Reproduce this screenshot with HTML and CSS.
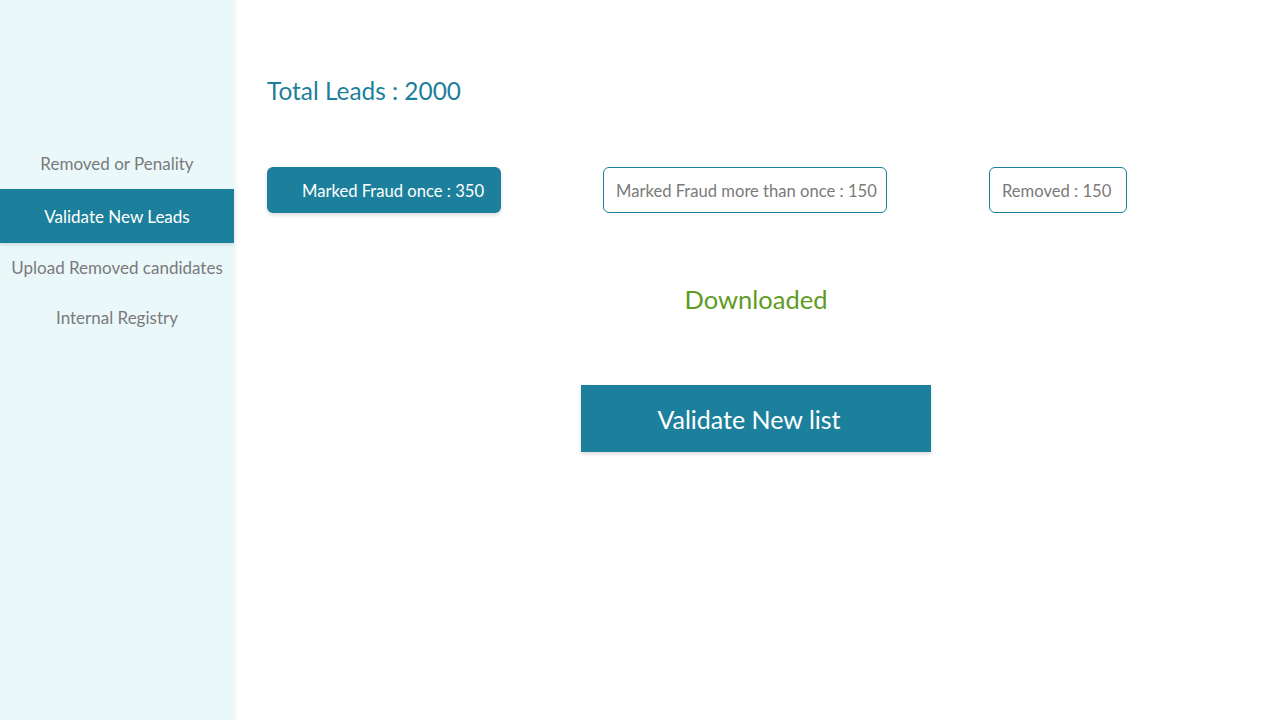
FILE: index.html
```html
<!DOCTYPE html>
<html>
<head>
<meta charset="utf-8">
<link rel="stylesheet" href="styles.css">
</head>
<body>
<div class="app">
  <aside class="sidebar">
    <nav class="nav">
      <div class="nav-item">Removed or Penality</div>
      <div class="nav-item active">Validate New Leads</div>
      <div class="nav-item">Upload Removed candidates</div>
      <div class="nav-item">Internal Registry</div>
    </nav>
  </aside>
  <main class="main">
    <h1 class="total">Total Leads : 2000</h1>
    <div class="cards">
      <div class="card filled">Marked Fraud once : 350</div>
      <div class="card outline">Marked Fraud more than once : 150</div>
      <div class="card outline">Removed : 150</div>
    </div>
    <div class="status">Downloaded</div>
    <div class="action">
      <button class="validate-btn">Validate New list</button>
    </div>
  </main>
</div>
</body>
</html>
```
FILE: styles.css
```css
html, body {
  margin: 0;
  padding: 0;
  background: #ffffff;
  font-family: Lato, "Open Sans", sans-serif;
}
.app {
  display: flex;
  width: 1280px;
  height: 720px;
}
.sidebar {
  width: 234px;
  flex: none;
  background: #eaf8fa;
  box-shadow: 2px 0 4px rgba(0,0,0,0.05);
  position: relative;
  z-index: 1;
}
.nav {
  display: flex;
  flex-direction: column;
  padding-top: 138px;
}
.nav-item {
  height: 48px;
  display: flex;
  align-items: center;
  justify-content: center;
  color: #7a7a7a;
  font-size: 17px;
  white-space: nowrap;
}
.nav-item:nth-child(1) { height: 51px; }
.nav-item.active {
  height: 54px;
  background: #1c809c;
  color: #ffffff;
  box-shadow: 0 2px 3px rgba(0,0,0,0.12);
}
.nav-item:nth-child(3) { height: 48px; }
.nav-item:nth-child(4) { height: 53px; }
.main {
  flex: 1;
  padding: 77px 0 0 33px;
  display: flex;
  flex-direction: column;
}
.total {
  margin: 0;
  font-weight: 400;
  font-size: 24.4px;
  line-height: 28px;
  color: #1c7f9b;
}
.cards {
  display: flex;
  gap: 102px;
  margin-top: 62px;
}
.card {
  height: 46px;
  box-sizing: border-box;
  display: flex;
  align-items: center;
  font-size: 16.6px;
  border-radius: 6px;
  white-space: nowrap;
  padding-top: 2px;
}
.card.filled {
  width: 234px;
  background: #1c809c;
  color: #ffffff;
  padding-left: 35px;
  padding-right: 10px;
  box-shadow: 0 2px 4px rgba(0,0,0,0.15);
}
.card.outline {
  border: 1.5px solid #1c7f9b;
  color: #7a7a7a;
  padding-left: 12px;
  padding-right: 12px;
}
.card.outline:nth-child(2) { width: 284px; }
.card.outline:nth-child(3) { width: 138px; }
.status {
  margin-top: 72px;
  margin-right: 35px;
  text-align: center;
  color: #5e9b1f;
  font-size: 25.5px;
  line-height: 28px;
}
.action {
  display: flex;
  justify-content: center;
  margin-top: 72px;
  margin-right: 35px;
}
.validate-btn {
  width: 350px;
  height: 67px;
  border: none;
  background: #1c809c;
  color: #ffffff;
  font-family: Lato, "Open Sans", sans-serif;
  font-size: 25px;
  box-shadow: 0 2px 4px rgba(0,0,0,0.15);
  padding: 0 14px 0 0;
}
```
